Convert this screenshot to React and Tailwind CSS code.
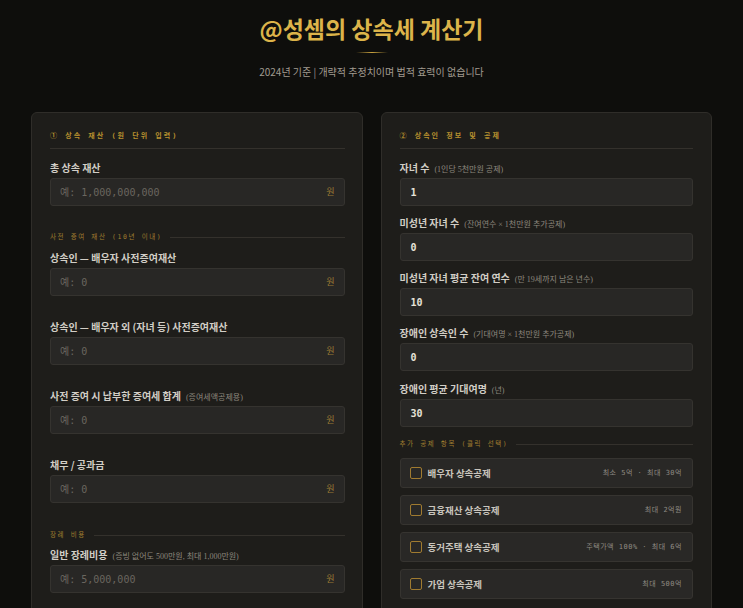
import React from "react";

const SANS = { fontFamily: '"Noto Sans CJK KR", "Noto Sans", sans-serif' };
const MONO = { fontFamily: '"DejaVu Sans Mono", "Noto Sans CJK KR", monospace' };
const SERIF = { fontFamily: '"Liberation Serif", "Noto Sans CJK KR", serif' };

function PanelTitle({ children }) {
  return (
    <div className="pb-[7px] border-b border-[#34312c] mb-[13px]">
      <div
        className="text-[7px] leading-[10px] tracking-[2px] text-[#b8912f] font-bold"
        style={MONO}
      >
        {children}
      </div>
    </div>
  );
}

function SubTitle({ children, className = "" }) {
  return (
    <div className={"flex items-center gap-[8px] " + className}>
      <div
        className="text-[6.5px] leading-[10px] tracking-[1.6px] text-[#a07e30] whitespace-nowrap"
        style={MONO}
      >
        {children}
      </div>
      <div className="flex-1 h-px bg-[#34312c]" />
    </div>
  );
}

function Label({ text, hint }) {
  return (
    <div className="flex items-baseline gap-[5px] h-[12px] leading-[12px] mb-[4px] whitespace-nowrap">
      <span className="text-[10px] font-bold text-[#d2cec6]" style={SANS}>
        {text}
      </span>
      {hint && (
        <span className="text-[8px] text-[#8c877d]" style={SERIF}>
          {hint}
        </span>
      )}
    </div>
  );
}

function WonInput({ placeholder }) {
  return (
    <div className="h-[28px] rounded-[3px] bg-[#282725] border border-[#35332f] flex items-center justify-between pl-[9px] pr-[9px]">
      <span className="text-[10px] text-[#6a665f]" style={MONO}>
        {placeholder}
      </span>
      <span className="text-[9px] text-[#9a7a34]" style={SANS}>
        원
      </span>
    </div>
  );
}

function NumInput({ value }) {
  return (
    <div className="h-[28px] rounded-[3px] bg-[#282725] border border-[#35332f] flex items-center pl-[10px]">
      <span className="text-[10px] font-bold text-[#e6e2d8]" style={MONO}>
        {value}
      </span>
    </div>
  );
}

function CheckCard({ title, note }) {
  return (
    <div className="h-[30px] rounded-[3px] bg-[#292826] border border-[#363430] flex items-center pl-[9px] pr-[10px]">
      <div className="w-[12px] h-[12px] rounded-[2px] border border-[#a07b30] mr-[6px]" />
      <span className="text-[9.5px] font-bold text-[#c9c5bd]" style={SANS}>
        {title}
      </span>
      <span
        className="ml-auto text-[7px] tracking-[0.5px] text-[#8f8b83]"
        style={MONO}
      >
        {note}
      </span>
    </div>
  );
}

function LeftPanel() {
  return (
    <div className="rounded-[6px] bg-[#1e1d1a] border border-[#2f2d29] pt-[18px] pl-[18px] pr-[17px] pb-[30px]">
      <PanelTitle>① 상속 재산 (원 단위 입력)</PanelTitle>

      <Label text="총 상속 재산" />
      <WonInput placeholder="예: 1,000,000,000" />

      <SubTitle className="mt-[26px] mb-[10px]">사전 증여 재산 (10년 이내)</SubTitle>

      <Label text="상속인 — 배우자 사전증여재산" />
      <WonInput placeholder="예: 0" />

      <div className="h-[25px]" />
      <Label text="상속인 — 배우자 외 (자녀 등) 사전증여재산" />
      <WonInput placeholder="예: 0" />

      <div className="h-[25px]" />
      <Label text="사전 증여 시 납부한 증여세 합계" hint="(증여세액공제용)" />
      <WonInput placeholder="예: 0" />

      <div className="h-[25px]" />
      <Label text="채무 / 공과금" />
      <WonInput placeholder="예: 0" />

      <SubTitle className="mt-[27px] mb-[9px]">장례 비용</SubTitle>

      <Label text="일반 장례비용" hint="(증빙 없어도 500만원, 최대 1,000만원)" />
      <WonInput placeholder="예: 5,000,000" />
    </div>
  );
}

function RightPanel() {
  return (
    <div className="rounded-[6px] bg-[#1e1d1a] border border-[#2f2d29] pt-[18px] pl-[18px] pr-[18px] pb-[30px]">
      <PanelTitle>② 상속인 정보 및 공제</PanelTitle>

      <Label text="자녀 수" hint="(1인당 5천만원 공제)" />
      <NumInput value="1" />

      <div className="h-[11px]" />
      <Label text="미성년 자녀 수" hint="(잔여연수 × 1천만원 추가공제)" />
      <NumInput value="0" />

      <div className="h-[11px]" />
      <Label text="미성년 자녀 평균 잔여 연수" hint="(만 19세까지 남은 년수)" />
      <NumInput value="10" />

      <div className="h-[11px]" />
      <Label text="장애인 상속인 수" hint="(기대여명 × 1천만원 추가공제)" />
      <NumInput value="0" />

      <div className="h-[12px]" />
      <Label text="장애인 평균 기대여명" hint="(년)" />
      <NumInput value="30" />

      <SubTitle className="mt-[12px] mb-[9px]">추가 공제 항목 (클릭 선택)</SubTitle>

      <div className="flex flex-col gap-[7px]">
        <CheckCard title="배우자 상속공제" note="최소 5억 · 최대 30억" />
        <CheckCard title="금융재산 상속공제" note="최대 2억원" />
        <CheckCard title="동거주택 상속공제" note="주택가액 100% · 최대 6억" />
        <CheckCard title="가업 상속공제" note="최대 500억" />
      </div>
    </div>
  );
}

export default function App() {
  return (
    <div className="min-h-screen bg-[#0e0e0c] overflow-hidden" style={SANS}>
      <header className="flex flex-col items-center -mt-[8px]">
        <div
          className="text-[8px] leading-[12px] tracking-[3px] text-[#a07e30]"
          style={MONO}
        >
          INHERITANCE TAX CALCULATOR
        </div>
        <h1
          className="mt-[8px] text-[23px] leading-[32px] font-bold text-[#dcb44a]"
          style={SANS}
        >
          @성셈의 상속세 계산기
        </h1>
        <div className="mt-[8px] w-[32px] h-px bg-gradient-to-r from-transparent via-[#c9a23e] to-transparent" />
        <div
          className="mt-[12px] text-[10px] leading-[14px] text-[#a19b90]"
          style={SANS}
        >
          2024년 기준 | 개략적 추정치이며 법적 효력이 없습니다
        </div>
      </header>

      <main className="grid grid-cols-2 gap-[18px] px-[31px] mt-[33px]">
        <LeftPanel />
        <RightPanel />
      </main>
    </div>
  );
}
